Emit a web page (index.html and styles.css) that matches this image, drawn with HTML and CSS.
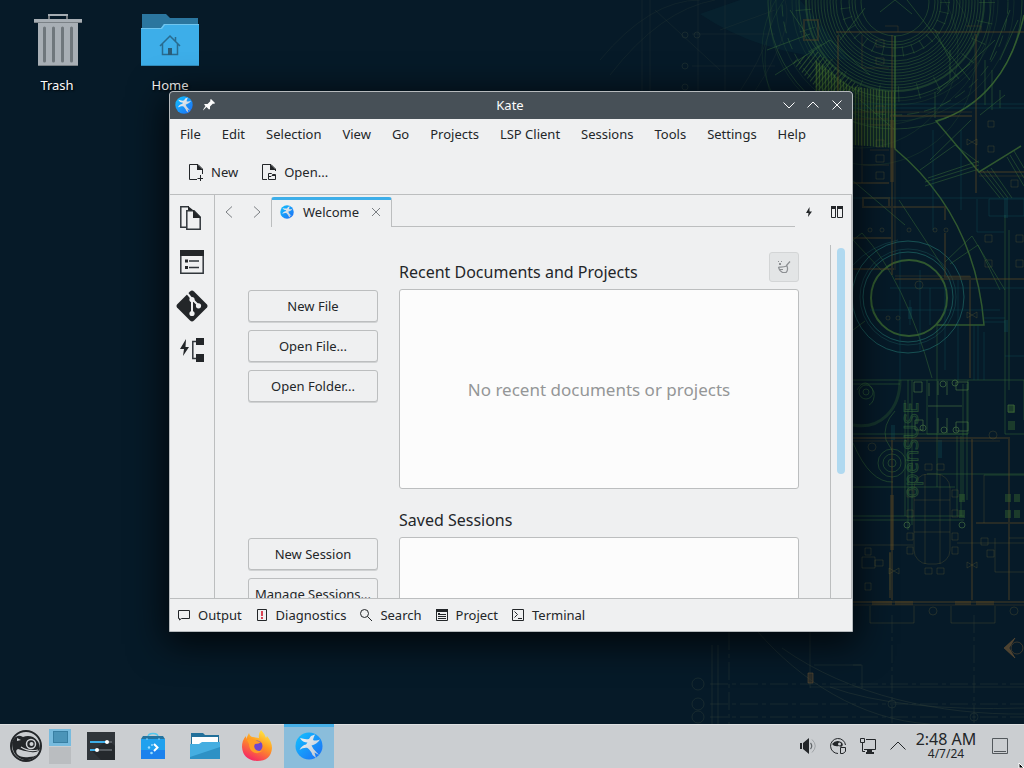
FILE: index.html
```html
<!DOCTYPE html>
<html lang="en">
<head>
<meta charset="utf-8">
<meta name="viewport" content="width=device-width, initial-scale=1">
<title>Desktop</title>
<link rel="stylesheet" href="styles.css">
</head>
<body>
<svg class="defs" aria-hidden="true">
  <defs>
    <linearGradient id="kateBlue" x1="0" y1="0" x2="1" y2="1"><stop offset="0" stop-color="#12c3ff"/><stop offset="1" stop-color="#1d6cf5"/></linearGradient>
    <linearGradient id="kateBird" x1="0" y1="0" x2="1" y2="1"><stop offset="0" stop-color="#f4f6f8"/><stop offset="1" stop-color="#b9c6d4"/></linearGradient>
    <symbol id="kate" viewBox="0 0 28 28">
      <circle cx="14" cy="14" r="13.500" fill="url(#kateBlue)"/>
      <path fill="url(#kateBird)" d="M5 6C8 7 11 7.500 14 7L16 4L20 2.500L18.500 6L18 8C20 9 22 8.500 25 7.500C23 11 19.500 12.500 16.500 13.500L18.500 17L24 23L19.500 20.500L21 26L17.500 23C16.500 20 14.500 17.500 12.500 16C9.500 15.500 7 16.500 4.500 18C6 14.500 8.500 13 11 12.500L12.500 10.500C9.500 10.500 6.500 9 5 6Z"/>
    </symbol>
    <symbol id="bowtie" viewBox="-6 -6 12 12" overflow="visible"><path d="M-5-3L5 3V-3L-5 3Z"/></symbol>
    <pattern id="hatch" width="3" height="4" patternUnits="userSpaceOnUse"><path stroke="#5b8a2c" stroke-opacity=".4" fill="none" d="M.5 0V4"/></pattern>
    <pattern id="fan" width="4" height="4" patternUnits="userSpaceOnUse" patternTransform="rotate(-52)"><path stroke="#4d7f33" stroke-opacity=".5" fill="none" d="M0 .5H4"/></pattern>
  </defs>
</svg>

<svg class="wallpaper" viewBox="0 0 1024 768" preserveAspectRatio="xMaxYMid slice" aria-hidden="true">
  <g fill="none">
    <path fill="#0c4a50" fill-opacity=".16" d="M700 14L740 0H800L850 60Q760 55 700 14Z"/>
    <path fill="url(#fan)" d="M792 62L815 50L862 88V92H820Z"/>
    <path fill="#4b7a26" fill-opacity=".16" d="M815 60L850 86L895 92V148L853 145V91H815Z"/>
    <path fill="url(#hatch)" d="M815 60L850 86L895 92V148L853 145V91H815Z"/>
    <g stroke="#3d7038" stroke-opacity=".4">
      <circle cx="895" cy="2" r="34"/><circle cx="895" cy="2" r="40"/><circle cx="895" cy="2" r="43"/><circle cx="895" cy="2" r="46"/><circle cx="895" cy="2" r="54"/>
      <circle cx="895" cy="2" r="59"/><circle cx="895" cy="2" r="62"/><circle cx="895" cy="2" r="65"/><circle cx="895" cy="2" r="68"/><circle cx="895" cy="2" r="71"/><circle cx="895" cy="2" r="74"/><circle cx="895" cy="2" r="77"/><circle cx="895" cy="2" r="80"/><circle cx="895" cy="2" r="83"/><circle cx="895" cy="2" r="86"/>
      <circle cx="895" cy="2" r="89" stroke-width="2"/><circle cx="895" cy="2" r="96"/><circle cx="895" cy="2" r="99" stroke-opacity=".2"/><circle cx="895" cy="2" r="103" stroke-opacity=".2"/><circle cx="895" cy="2" r="113" stroke-dasharray="12 5"/><circle cx="895" cy="2" r="119" stroke-opacity=".2"/><circle cx="895" cy="2" r="127"/>
      <circle cx="880" cy="15" r="110" stroke-opacity=".2"/><circle cx="870" cy="60" r="105" stroke-opacity=".2"/><circle cx="860" cy="50" r="98" stroke-opacity=".2"/>
      <circle cx="895" cy="2" r="50" stroke-width="10" stroke-opacity=".35" stroke-dasharray="1 9"/><circle cx="895" cy="2" r="92" stroke-width="16" stroke-opacity=".35" stroke-dasharray="1 19"/>
    </g>
    <g stroke="#467a32" stroke-opacity=".65" stroke-width="1.500">
      <path d="M1024 15C1012 70 982 108 936 121L979 172L1021 146M895 36V149C948 193 978 250 984 325H937"/>
      <circle cx="909" cy="298" r="38" stroke-width="2"/>
    </g>
    <g stroke="#356a35" stroke-opacity=".5">
      <path d="M775 75L830 40L870 75M767 50L810 34M790 10L840 84M930 160L971 120M920 170L955 145L979 163M925 182L979 165M925 186L979 169M928 178L979 161M979 172L1000 198M983 171L1004 198M987 170L1008 198M991 168L1012 198M1007 157L1024 186M1010 155L1024 178M1014 151L1024 168M937 90L970 64M995 40L937 94M907 0L970 80M865 8L840 40M1005 95L980 115M950 60L935 30M895 0L880 12M895 0L912 14M1010 10L990 60M1000 60L1018 20M860 100L895 130M935 92V118M985 60V105M992 70V110M1000 90V108M950 50V80"/>
      <path d="M853 240L862 233Q905 280 932 378M882 271L853 240M899 200L945 270M852 180L905 225M853 330L865 321M945 262L972 236L1005 290M950 264L978 245L1000 290"/>
      <path d="M853 380H1024M853 384H900M908 380V530M912 380V525M927 380V434H968V380M963 384V500M967 384V500M853 434H968M853 487H955M853 516H964M853 520H964M1005 215V434H1024M1009 230V390M1024 380V420M937 325V487M957 436V516M961 436V516M905 400V516M927 474H1024M984 475H1024"/>
      <circle cx="866" cy="392" r="7"/><circle cx="866" cy="392" r="3"/><path d="M857 390Q866 375 874 392Q875 402 869 405M895 411Q882 425 886 440L893 452M853 443Q870 483 893 482"/><path stroke-width="3" stroke-opacity=".3" d="M853 425C880 430 900 410 900 380"/>
      <circle cx="892" cy="463" r="14"/><circle cx="892" cy="463" r="9"/><circle cx="892" cy="463" r="4"/>
    </g>
    <g stroke="#23756f" stroke-opacity=".6"><circle cx="908" cy="297" r="45"/><circle cx="908" cy="297" r="48" stroke-opacity=".3"/><circle cx="908" cy="297" r="56"/><path stroke-opacity=".3" d="M853 265Q870 246 898 240"/></g>
    <g stroke="#105058" stroke-opacity=".4">
      <path d="M853 104H1024M853 108H1024M853 198H1024M890 288H1024M930 288V325M958 280V380M945 288V370M977 199V232H1004M989 199V216H1024V199ZM984 318H1005M984 322H1005M984 332V380M974 325V380M978 325V380M1005 356H1024M910 300V325M870 310H1000M900 250V380M920 270V350M933 130V230M961 130V210"/>
      <path stroke-width="4" stroke-opacity=".3" d="M910 307V319M1006 320V332M893 425V440M940 440V458M1006 198V218"/>
    </g>
    <g stroke="#584522" stroke-opacity=".4" stroke-width="2">
      <path d="M836 32H1024M804 20H818V40H804ZM838 35V92M892 35V275M976 34V193M890 116H972M979 172H1024M853 183H889M863 198H889V207H863ZM890 207H945V220M853 238H892M945 233V277H970V378M895 279H1024M853 269H894M853 438H1009V600M972 438V600M892 440V600M853 602H1024M1009 450V520M976 523H1024M890 552V598"/>
      <path stroke-width="1" d="M862 35V68H889M862 91V183M870 125H889M870 150H889M863 165H889M885 26H898V32M966 26H981V32M853 112H972M853 119H889M979 176H1024M895 276H970M853 441H1000M853 605H1024M895 122V270"/>
      <path stroke-width="4" d="M892 120V182M892 495V550M872 603H892M895 603H913M955 603H971M976 603H994"/>
    </g>
    <g stroke="#6a6334" stroke-opacity=".28">
      <path d="M876 40H884V47H876ZM876 58H884V64H876ZM876 106H884V112H876ZM876 140H884V147H876ZM876 155H884V162H876ZM876 172H884V179H876ZM988 121H994V127H988ZM988 146H994V152H988ZM1011 180H1018V187H1011ZM985 235H992V242H985ZM1016 235H1023V242H1016ZM985 260H992V267H985ZM1016 260H1023V267H1016Z"/>
      <circle cx="870" cy="230" r="2"/><circle cx="882" cy="230" r="2"/><circle cx="909" cy="230" r="2"/><circle cx="935" cy="230" r="2"/><circle cx="946" cy="230" r="2"/><circle cx="888" cy="318" r="2"/><circle cx="898" cy="318" r="2"/><circle cx="919" cy="285" r="4"/>
      <rect x="914" y="474" width="36" height="90" rx="14"/><path d="M925 474V564M940 474V564M914 500H950M914 532H950M925 464H932V470H925ZM937 464H944V470H937ZM925 568H932V574H925ZM937 568H944V574H937ZM907 490H913V497H907ZM907 510H913V517H907ZM907 533H913V540H907ZM907 547H913V554H907ZM952 490H958V497H952ZM952 510H958V517H952ZM952 533H958V540H952ZM952 547H958V554H952Z"/>
      <path d="M862 557H875V568H862ZM865 548H871V555H865ZM865 583H871V590H865ZM875 560H883V566H875ZM981 538H988V545H981ZM987 550H994V557H987ZM984 475V523M995 538V572H1024M1009 538H1024"/>
      <circle cx="933" cy="611" r="4"/><circle cx="1014" cy="611" r="4"/><circle cx="872" cy="447" r="4"/><circle cx="993" cy="435" r="4"/>
      <path d="M870 606V623H914V606M951 606V623H995V606M853 545H913M890 553V590M957 543H1024"/>
      <use href="#bowtie" x="888" y="565" width="12" height="12"/><use href="#bowtie" x="966" y="559" width="12" height="12"/><use href="#bowtie" x="966" y="309" width="12" height="12"/><use href="#bowtie" x="966" y="136" width="12" height="12"/>
    </g>
    <g stroke="#4c7a44" stroke-opacity=".6">
      <path d="M914 382V392H922V382ZM929 383V396M938 381V395M947 381V395M956 382H968V390H956ZM915 420H923V430H915ZM938 418V433M947 418V433M956 422H968V431H956ZM928 406H962M1008 405H1014V412H1008Z"/>
      <circle cx="943" cy="384" r="3"/><circle cx="955" cy="383" r="3"/><circle cx="944" cy="430" r="3"/><circle cx="956" cy="430" r="3"/><circle cx="923" cy="428" r="3"/><circle cx="907" cy="525" r="3"/><circle cx="962" cy="525" r="3"/>
    </g>
    <g fill="#3d6d2f" fill-opacity=".4"><path d="M1008 405H1015V413H1008ZM1008 421H1015V430H1008ZM1005 494H1011V502H1005ZM1014 494H1020V502H1014ZM1005 510H1011V518H1005ZM1014 510H1020V518H1014ZM959 494H965V502H959ZM959 510H965V518H959Z"/></g>
    <g stroke="#314139" stroke-opacity=".4">
      <path stroke-dasharray="18 4 4 4" d="M710 684H1024M710 704H1024M710 717H1024M892 615V724M974 615V724M729 632V724"/>
      <path d="M758 632C800 680 860 720 930 724M782 648C850 696 940 715 1024 714M810 687H1024M853 665H862V688M810 632V688M814 665H861M830 687Q900 712 1024 708M712 645V724M718 645V724"/>
      <circle cx="698" cy="684" r="6"/><circle cx="698" cy="704" r="6"/><circle cx="698" cy="717" r="6"/><circle cx="892" cy="704" r="4"/><circle cx="974" cy="717" r="4"/>
      <path stroke-opacity=".25" d="M692 34H775M692 66H775M698 0V91M725 0V91M642 0V91M650 0V91M720 30L775 10M655 10L720 70M600 60Q650 0 700 0M610 75Q660 10 715 0M740 91Q780 30 770 0M755 91Q795 30 785 0"/>
      <circle cx="685" cy="35" r="3"/><circle cx="685" cy="66" r="3"/><circle cx="685" cy="87" r="3"/><circle cx="697" cy="35" r="3"/>
    </g>
    <g stroke="#6b5434" stroke-opacity=".5"><path fill="#6b5434" fill-opacity=".7" d="M1015 638L1004 648L1015 658L1009 648Z"/><circle cx="1017" cy="648" r="6"/><path fill="#453a27" fill-opacity=".5" d="M808 673H813V683H808Z"/></g>
  </g>
  <text class="wall-text" transform="translate(918 498) rotate(-90)">openSUSE</text>
</svg>

<main class="desktop">
  <section class="shortcuts" aria-label="Desktop icons">
    <a class="shortcut" href="#trash">
      <svg width="64" height="64" viewBox="0 0 64 64">
        <path fill="#747a7f" d="M23 6V12H25V8H41V12H43V6L41 6H24Z"/><path fill="#a5adb3" d="M23 6H43V8H23Z"/>
        <path fill="#a8afb5" d="M9 11H57V14H53V58H13V14H9Z"/><path fill="#7a8186" d="M9 14H57V15H9ZM13 57H53V58H13Z"/>
        <path stroke="#6f777c" stroke-width="3" stroke-linecap="round" d="M19.500 20V53M28.500 20V53M37.500 20V53M46.500 20V53"/>
      </svg>
      <span>Trash</span>
    </a>
    <a class="shortcut" href="#home">
      <svg width="64" height="64" viewBox="0 0 64 64">
        <path fill="#2b769f" d="M4 6H28L32 10H60V22H4Z"/><path fill="#3daee9" d="M3 20H23L26 16H61V58H3Z"/><path fill="#70c5ef" d="M3 20H23L26 16H61V17H27L24 21H3Z"/><path fill="#318bba" d="M3 57H61V58H3Z"/>
        <path fill="none" stroke="#296b8f" stroke-width="1.500" d="M22 38L32 28L42 38M24.500 36V46.500H39.500V36M37.500 33V29"/><path fill="#2c5d78" d="M30 40H34V47H30Z"/>
      </svg>
      <span>Home</span>
    </a>
  </section>

  <section class="window" aria-label="Kate">
    <header class="titlebar">
      <div class="title-side">
        <svg width="18" height="18"><use href="#kate"/></svg>
        <button class="plain" aria-label="Pin window"><svg width="16" height="16" viewBox="0 0 16 16"><path fill="#fcfcfc" d="M9 3L10 2L14 6L13 7L12 6.500L9 9.500L9 12L8 12.500L5.500 10L2.500 13L2 13.500L2.500 12L4.500 9L3 7.500L4 7L6.500 7L9.500 4Z"/></svg></button>
      </div>
      <h1>Kate</h1>
      <div class="title-side title-end">
        <button class="plain" aria-label="Minimize"><svg width="16" height="16" viewBox="0 0 16 16"><path class="w" d="M2.500 5.500L8 11L13.500 5.500"/></svg></button>
        <button class="plain" aria-label="Maximize"><svg width="16" height="16" viewBox="0 0 16 16"><path class="w" d="M2.500 10.500L8 5L13.500 10.500"/></svg></button>
        <button class="plain" aria-label="Close"><svg width="16" height="16" viewBox="0 0 16 16"><path class="w" d="M3.500 3.500L12.500 12.500M12.500 3.500L3.500 12.500"/></svg></button>
      </div>
    </header>
    <nav class="menubar" aria-label="Menu">
      <button>File</button><button>Edit</button><button>Selection</button><button>View</button><button>Go</button><button>Projects</button><button>LSP Client</button><button>Sessions</button><button>Tools</button><button>Settings</button><button>Help</button>
    </nav>
    <div class="toolbar">
      <button><svg width="22" height="22" viewBox="0 0 22 22"><path class="d" d="M12 18.500H4.500V3.500H13L17.500 8V13M15.500 14V20M12.500 17.500H18"/><path fill="#232629" d="M12 3L18 9H12Z"/></svg>New</button>
      <button><svg width="22" height="22" viewBox="0 0 22 22"><path class="d" d="M9 18.500H4.500V3.500H13L17.500 8V10M10.500 18.500V12.500H13.500L14.500 13.500H17.500V18.500ZM10.500 15.500H13L14 14.500H17.500"/><path fill="#232629" d="M12 3L18 9H12Z"/></svg>Open...</button>
    </div>

    <div class="workspace">
      <nav class="sidebar" aria-label="Tool views">
        <button aria-label="Documents"><svg width="24" height="24" viewBox="0 0 24 24"><path fill="none" stroke="#31363b" stroke-width="1.500" d="M6 21.200H.8V.8H9M6.800 4.800H14L20.200 11V23.200H6.800Z"/><path fill="#232629" d="M8 0L13 4H8ZM13 4L21 12H13Z"/></svg></button>
        <button aria-label="Symbols"><svg width="24" height="24" viewBox="0 0 24 24"><path fill="none" stroke="#31363b" stroke-width="1.500" d="M.8.8H23.200V23.200H.8ZM9 11H19M9 17.500H19"/><path fill="#232629" d="M0 0H24V6H0ZM5 9.500H8V12.500H5ZM5 16H8V19H5Z"/></svg></button>
        <button aria-label="Git"><svg width="32" height="32" viewBox="0 0 32 32"><path fill="#232629" d="M16 .5Q17 .5 18 1.500L31 14.500Q32 16 31 17.500L18 30.500Q16 32.500 14 30.500L1 17.500Q0 16 1 14.500L14 1.500Q15 .5 16 .5Z"/><path stroke="#eff0f1" stroke-width="2" fill="none" d="M11 3L16 9V24M16 9L23 16"/><circle cx="16" cy="9.500" r="2.600" fill="#eff0f1"/><circle cx="16" cy="23.500" r="2.600" fill="#eff0f1"/><circle cx="22.500" cy="15.800" r="2.600" fill="#eff0f1"/></svg></button>
        <button aria-label="Language server"><svg width="24" height="24" viewBox="0 0 24 24"><path fill="#232629" d="M6 1L0 11H4L3 18L9 9H5.500ZM16 0H24V7H16ZM16 16H24V24H16Z"/><path fill="none" stroke="#31363b" stroke-width="1.500" d="M16 3.500H12.800V20.500H16"/></svg></button>
      </nav>
      <div class="editor">
        <div class="tabbar">
          <div class="history">
            <button class="plain" aria-label="Back"><svg width="16" height="16" viewBox="0 0 16 16"><path class="g" d="M11 2.500L5 8L11 13.500"/></svg></button>
            <button class="plain" aria-label="Forward"><svg width="16" height="16" viewBox="0 0 16 16"><path class="g" d="M5 2.500L11 8L5 13.500"/></svg></button>
          </div>
          <div class="tab">
            <svg width="14" height="14"><use href="#kate"/></svg><span>Welcome</span>
            <button class="plain" aria-label="Close tab"><svg width="16" height="16" viewBox="0 0 16 16"><path class="g" d="M4 4L12 12M12 4L4 12"/></svg></button>
          </div>
          <div class="tab-rest"></div>
          <div class="tab-tools">
            <button class="plain" aria-label="Quick open"><svg width="16" height="16" viewBox="0 0 16 16"><path fill="#232629" d="M8.500 3L5 9H7.500L7 13L11 7.500H8.500Z"/></svg></button>
            <button class="plain" aria-label="Split view"><svg width="16" height="16" viewBox="0 0 16 16"><path fill="none" stroke="#232629" d="M2.500 2.500H6.500V13.500H2.500ZM8.500 2.500H13.500V13.500H8.500Z"/><path fill="#232629" d="M2 2H7V5H2ZM8 2H14V5H8Z"/></svg></button>
          </div>
        </div>
        <div class="view">
          <div class="page">
            <section class="group">
              <div class="actions"><button>New File</button><button>Open File...</button><button>Open Folder...</button></div>
              <div class="listing">
                <div class="heading"><h2>Recent Documents and Projects</h2>
                  <button class="clear" aria-label="Clear recent" disabled><svg width="16" height="16" viewBox="0 0 16 16"><path fill="none" stroke="#8d9093" stroke-width="1.200" d="M2.500 8Q7 8.500 11 7Q12.500 11 10 13.500H6.500Q3 11.500 2.500 8M3.500 10.500H7M10 7L14 2.500"/><path fill="#8d9093" d="M2 2H3V3H2ZM5 2H6V3H5ZM3 4H5V6H3Z"/></svg></button></div>
                <div class="box"><p>No recent documents or projects</p></div>
              </div>
            </section>
            <section class="group">
              <div class="actions"><button>New Session</button><button>Manage Sessions...</button></div>
              <div class="listing"><div class="heading"><h2>Saved Sessions</h2></div><div class="box"></div></div>
            </section>
          </div>
          <div class="scroll"><div class="thumb"></div></div>
        </div>
      </div>
    </div>

    <footer class="statusbar">
      <button><svg width="16" height="16" viewBox="0 0 16 16"><path class="d" d="M3.500 11.500H2.500V3.500H13.500V11.500H5.500L3.500 13Z"/></svg>Output</button>
      <button><svg width="16" height="16" viewBox="0 0 16 16"><path class="d" d="M3.500 2.500H12.500V13.500H3.500Z"/><path fill="#da4453" d="M7 4H9V9H7ZM7 10H9V12H7Z"/></svg>Diagnostics</button>
      <button><svg width="16" height="16" viewBox="0 0 16 16"><circle class="d" cx="6.500" cy="6.500" r="4"/><path class="d" d="M9.500 9.500L14 14"/></svg>Search</button>
      <button><svg width="16" height="16" viewBox="0 0 16 16"><path class="d" d="M2.500 2.500H13.500V13.500H2.500ZM6 7.500H12M4 9.500H12M4 11.500H12"/><path fill="#232629" d="M2 2H14V5H2ZM4 6H6V8H4Z"/></svg>Project</button>
      <button><svg width="16" height="16" viewBox="0 0 16 16"><path class="d" d="M2.500 2.500H13.500V13.500H2.500ZM4.500 4.500L7.500 7.500L4.500 10.500M8 11.500H12"/></svg>Terminal</button>
    </footer>
  </section>
</main>

<footer class="panel">
  <button class="launcher" aria-label="Application launcher"><svg width="34" height="34" viewBox="0 0 34 34"><circle cx="17" cy="17" r="15" fill="none" stroke="#232629" stroke-width="2"/><path fill="#232629" d="M3 13Q7 4 14 8Q19 6 24 8Q31 12 31 20Q28 24 22 23Q14 22 9 20Q6 21 8 25Q12 29 20 28Q25 28 28 26Q23 32 15 31Q3 28 3 13Z"/><circle cx="22" cy="15" r="4.500" fill="none" stroke="#d0d3d6" stroke-width="1.500"/><circle cx="22.500" cy="15" r="2" fill="#d0d3d6"/><path stroke="#d0d3d6" stroke-width="1.200" fill="none" d="M12 18Q19 23 29 21"/><path fill="#d0d3d6" d="M8 9L12 11L8 12Z"/></svg></button>
  <div class="pager"><button aria-label="Desktop 1"><i></i></button><button aria-label="Desktop 2"></button></div>
  <nav class="tasks" aria-label="Tasks">
    <button aria-label="System Settings"><svg width="32" height="32" viewBox="0 0 32 32"><path fill="#30353a" d="M2 2H30V30H2Z"/><path fill="#25292d" d="M7 21L16 30H30V16L23 10Z"/><path stroke="#565b60" stroke-width="2" d="M22 12H27M12 20H27"/><path stroke="#3daee9" stroke-width="2" d="M5 12H22M5 20H12"/><circle cx="22" cy="12" r="2" fill="#fff"/><circle cx="12" cy="20" r="2" fill="#fff"/></svg></button>
    <button aria-label="Discover"><svg width="32" height="32" viewBox="0 0 32 32"><path fill="none" stroke="#55c7ed" stroke-width="1.500" d="M11 9V7Q11 3.500 16 3.500Q21 3.500 21 7V9"/><path fill="#25749f" d="M6 6H26L28 9H4Z"/><path fill="#20a1ee" d="M4 9H28V29H4Z"/><path fill="#1c82ed" d="M4 20H28V29H4Z"/><path fill="none" stroke="#fff" stroke-width="2" d="M17 14L20.500 17.500L17 21"/><g fill="#9adcff"><circle cx="12" cy="17.500" r="1.200"/><circle cx="14.500" cy="23" r="1.300"/><circle cx="15" cy="15" r="1"/><circle cx="22" cy="9" r=".8"/><circle cx="10" cy="9" r=".8"/></g></svg></button>
    <button aria-label="Files"><svg width="32" height="32" viewBox="0 0 32 32"><path fill="#23709a" d="M2 3H14L16 5H30V16H2Z"/><path fill="#fff" d="M3 7H29V16H3Z"/><path fill="#45aee1" d="M1 14H10L13 12H31V29H1Z"/><path fill="#2d91c5" d="M1 27L31 17V29H1Z"/></svg></button>
    <button aria-label="Firefox"><svg width="32" height="32" viewBox="0 0 32 32"><defs><linearGradient id="fire" x1=".8" y1="0" x2=".3" y2="1"><stop offset="0" stop-color="#fff044"/><stop offset=".45" stop-color="#ff9a22"/><stop offset="1" stop-color="#f52267"/></linearGradient></defs><path fill="url(#fire)" d="M20 0Q24 4 25 8L26 6Q31 12 31 18Q30 31 16 31Q2 30 1 17Q1 10 5 6L5 9L8 3Q9 7 12 7L18 8Q17 4 20 0Z"/><circle cx="16" cy="16" r="5.500" fill="#7147cf"/><path fill="#ff9e26" d="M6 10Q11 7 16 11L20 12Q18 14 14 14Q12 17 15 20Q19 22 22 20Q18 25 12 22Q8 19 8 14Z"/></svg></button>
    <button class="active" aria-label="Kate"><svg width="28" height="28"><use href="#kate"/></svg></button>
  </nav>
  <div class="tray">
    <button class="plain" aria-label="Volume"><svg width="18" height="18" viewBox="0 0 18 18"><path fill="#232629" d="M1 6H3V12H1ZM4 6L10 1V17L4 12Z"/><path fill="none" stroke="#606569" stroke-width="1.200" d="M11.500 6Q14 9 11.500 12"/><path fill="none" stroke="#a0a4a7" d="M13 2.500Q19.500 9 13 15.500"/></svg></button>
    <button class="plain" aria-label="Updates"><svg width="18" height="18" viewBox="0 0 18 18"><path fill="none" stroke="#232629" d="M9 16.500A7.500 7.500 0 1 1 16.500 8M11.500 10.500H16.500V14.500L14 16.500L11.500 16.500Z"/><path fill="#232629" d="M3 7Q7 2 12 5Q15 7 13 9.500Q11 10 10 9Q5 10 3 7Z"/><circle cx="10.500" cy="7" r="1.500" fill="#d0d3d6"/></svg></button>
    <button class="plain" aria-label="Network"><svg width="18" height="18" viewBox="0 0 18 18"><path fill="none" stroke="#232629" d="M7 2.500H16.500V12.500H5M1.500 1.500H5.500V5.500H1.500ZM3.500 6V14.500H6"/><path fill="#232629" d="M8 13H13V15H15V17H7V15H8Z"/></svg></button>
    <button class="plain" aria-label="Show hidden icons"><svg width="18" height="18" viewBox="0 0 18 18"><path class="d" d="M1.500 12.500L9 5L16.500 12.500"/></svg></button>
  </div>
  <div class="clock"><time>2:48 AM</time><span>4/7/24</span></div>
  <button class="plain show-desktop" aria-label="Show desktop"><svg width="18" height="18" viewBox="0 0 18 18"><path fill="none" stroke="#53585c" d="M1.500 1.500H16.500V16.500H1.500ZM3 14.500H15"/></svg></button>
  <svg class="pointer" width="6" height="6" viewBox="0 0 6 6" aria-hidden="true"><path fill="#000" stroke="#fff" d="M1 1L6 6H1Z"/></svg>
</footer>
</body>
</html>
```
FILE: styles.css
```css
* { box-sizing: border-box; }

body {
  margin: 0;
  height: 100vh;
  display: flex;
  flex-direction: column;
  overflow: hidden;
  background: #061a28;
  color: #232629;
  font: 13px/18px "Noto Sans", sans-serif;
}

svg { display: block; flex: none; }
button { font: inherit; color: inherit; cursor: default; }
h1, h2, p { margin: 0; font-weight: 400; }

.defs { position: absolute; width: 0; height: 0; }
.wallpaper { position: absolute; inset: 0; width: 100%; height: 100%; }
.wall-text { font: 20px "Noto Sans", sans-serif; fill: none; stroke: #346638; stroke-opacity: .6; }

.w, .g, .d { fill: none; }
.w { stroke: #fcfcfc; }
.g { stroke: #7b7f83; }
.d { stroke: #232629; }

.plain {
  padding: 0;
  border: 0;
  background: none;
}

.desktop { position: relative; flex: 1; min-height: 0; }

.shortcuts { display: flex; gap: 17px; padding: 8px 9px; }
.shortcut {
  width: 96px;
  display: flex;
  flex-direction: column;
  align-items: center;
  gap: 4px;
  color: #fcfcfc;
  text-decoration: none;
  text-shadow: 1px 1px 2px #000;
}

.window {
  position: absolute;
  left: 169px;
  top: 91px;
  width: 684px;
  height: 541px;
  display: flex;
  flex-direction: column;
  border: 1px solid #b6babd;
  border-radius: 4px 4px 0 0;
  background: #eff0f1;
  box-shadow: 0 8px 36px 4px rgba(0, 0, 0, .75);
  overflow: hidden;
}

.titlebar {
  height: 27px;
  flex: none;
  display: flex;
  align-items: center;
  padding: 0 7px 2px 5px;
  background: #475057;
  color: #fcfcfc;
}
.titlebar h1 { font-size: 13px; line-height: 18px; }
.title-side { flex: 1; display: flex; align-items: center; gap: 8px; }
.title-end { justify-content: flex-end; }

.menubar { height: 30px; flex: none; display: flex; gap: 1px; }
.menubar button { padding: 0 10px; border: 0; background: none; }

.toolbar {
  height: 46px;
  flex: none;
  display: flex;
  padding: 0 5px;
  border-bottom: 1px solid #bcbebf;
}
.toolbar button {
  display: flex;
  align-items: center;
  gap: 4px;
  padding: 0 10px;
  border: 0;
  background: none;
}

.workspace { flex: 1; min-height: 0; display: flex; border-right: 1px solid #bcbebf; }
.sidebar { width: 45px; flex: none; border-right: 1px solid #bcbebf; padding-top: 1px; }
.sidebar button {
  width: 44px;
  height: 44px;
  display: grid;
  place-items: center;
  padding: 0;
  border: 0;
  background: none;
}

.editor { flex: 1; min-width: 0; display: flex; flex-direction: column; }
.tabbar { height: 32px; flex: none; display: flex; }
.history { width: 56px; display: flex; align-items: center; gap: 12px; padding: 2px 6px 0; }
.tab {
  display: flex;
  align-items: center;
  gap: 9px;
  margin-top: 2px;
  padding: 0 7px 4px 8px;
  border: solid #bcbebf;
  border-width: 3px 1px 0;
  border-top-color: #3daee9;
  border-radius: 3px 3px 0 0;
}
.tab-rest { flex: 1; border-bottom: 1px solid #bcbebf; }
.tab-tools { display: flex; align-items: center; gap: 12px; padding: 2px 6px 0; }

.view { flex: 1; min-height: 0; display: flex; padding-top: 18px; }
.page {
  flex: 1;
  display: flex;
  flex-direction: column;
  gap: 11px;
  padding: 7px 31px 0 33px;
  overflow: hidden;
}
.group { display: flex; gap: 21px; }
.actions { width: 130px; display: flex; flex-direction: column; gap: 8px; padding-top: 38px; }
.actions button {
  height: 32px;
  flex: none;
  padding: 0;
  border: 1px solid #bcbebf;
  border-radius: 3px;
  background: #eff0f1;
  box-shadow: 0 1px 0 #d0d2d3;
  white-space: nowrap;
}
.listing { flex: 1; }
.heading { height: 30px; display: flex; align-items: flex-end; justify-content: space-between; margin-bottom: 7px; }
.heading h2 { font-size: 16px; line-height: 20px; }
.heading .clear {
  width: 30px;
  height: 30px;
  display: grid;
  place-items: center;
  padding: 0;
  border: 1px solid #d3d5d6;
  border-radius: 3px;
  background: #e3e5e6;
}
.box {
  height: 200px;
  display: grid;
  place-items: center;
  padding-top: 2px;
  border: 1px solid #bcbebf;
  border-radius: 3px;
  background: #fcfcfc;
  color: #949697;
}
.box p { font-size: 17px; line-height: 24px; }

.scroll { width: 21px; flex: none; padding: 3px 6px; border-left: 1px solid #bcbebf; }
.thumb { width: 8px; height: 65%; border-radius: 4px; background: #b0d9f0; }

.statusbar { height: 33px; flex: none; display: flex; border-top: 1px solid #bcbebf; }
.statusbar button {
  display: flex;
  align-items: center;
  gap: 6px;
  padding: 0 6px;
  border: 0;
  background: none;
}

.panel {
  position: relative;
  height: 44px;
  flex: none;
  display: flex;
  align-items: center;
  padding-right: 15px;
  background: #cbced1;
  box-shadow: inset 0 1px 0 #dfe1e2;
}
.launcher { padding: 0 6px 0 9px; border: 0; background: none; }
.pager { width: 22px; display: flex; flex-direction: column; gap: 1px; }
.pager button { height: 17px; padding: 0; border: 0; background: #babdc0; display: grid; place-items: center; }
.pager button:first-child { background: #77bbde; }
.pager i { width: 15px; height: 12px; border: 1px solid #387fa3; background: #4b94b8; }
.tasks { align-self: stretch; display: flex; gap: 2px; margin-left: 5px; }
.tasks button {
  width: 50px;
  display: grid;
  place-items: center;
  padding: 0;
  border: 0;
  background: none;
}
.tasks .active { background: #8abddb; box-shadow: inset 0 3px 0 #45afe7; }
.tray { display: flex; gap: 12px; margin-left: auto; }
.clock {
  width: 78px;
  display: flex;
  flex-direction: column;
  align-items: center;
  margin-right: 6px;
  font-size: 12px;
  line-height: 14px;
}
.clock time { font-size: 16px; line-height: 16px; }
.pointer { position: absolute; right: 0; bottom: 0; }
```
